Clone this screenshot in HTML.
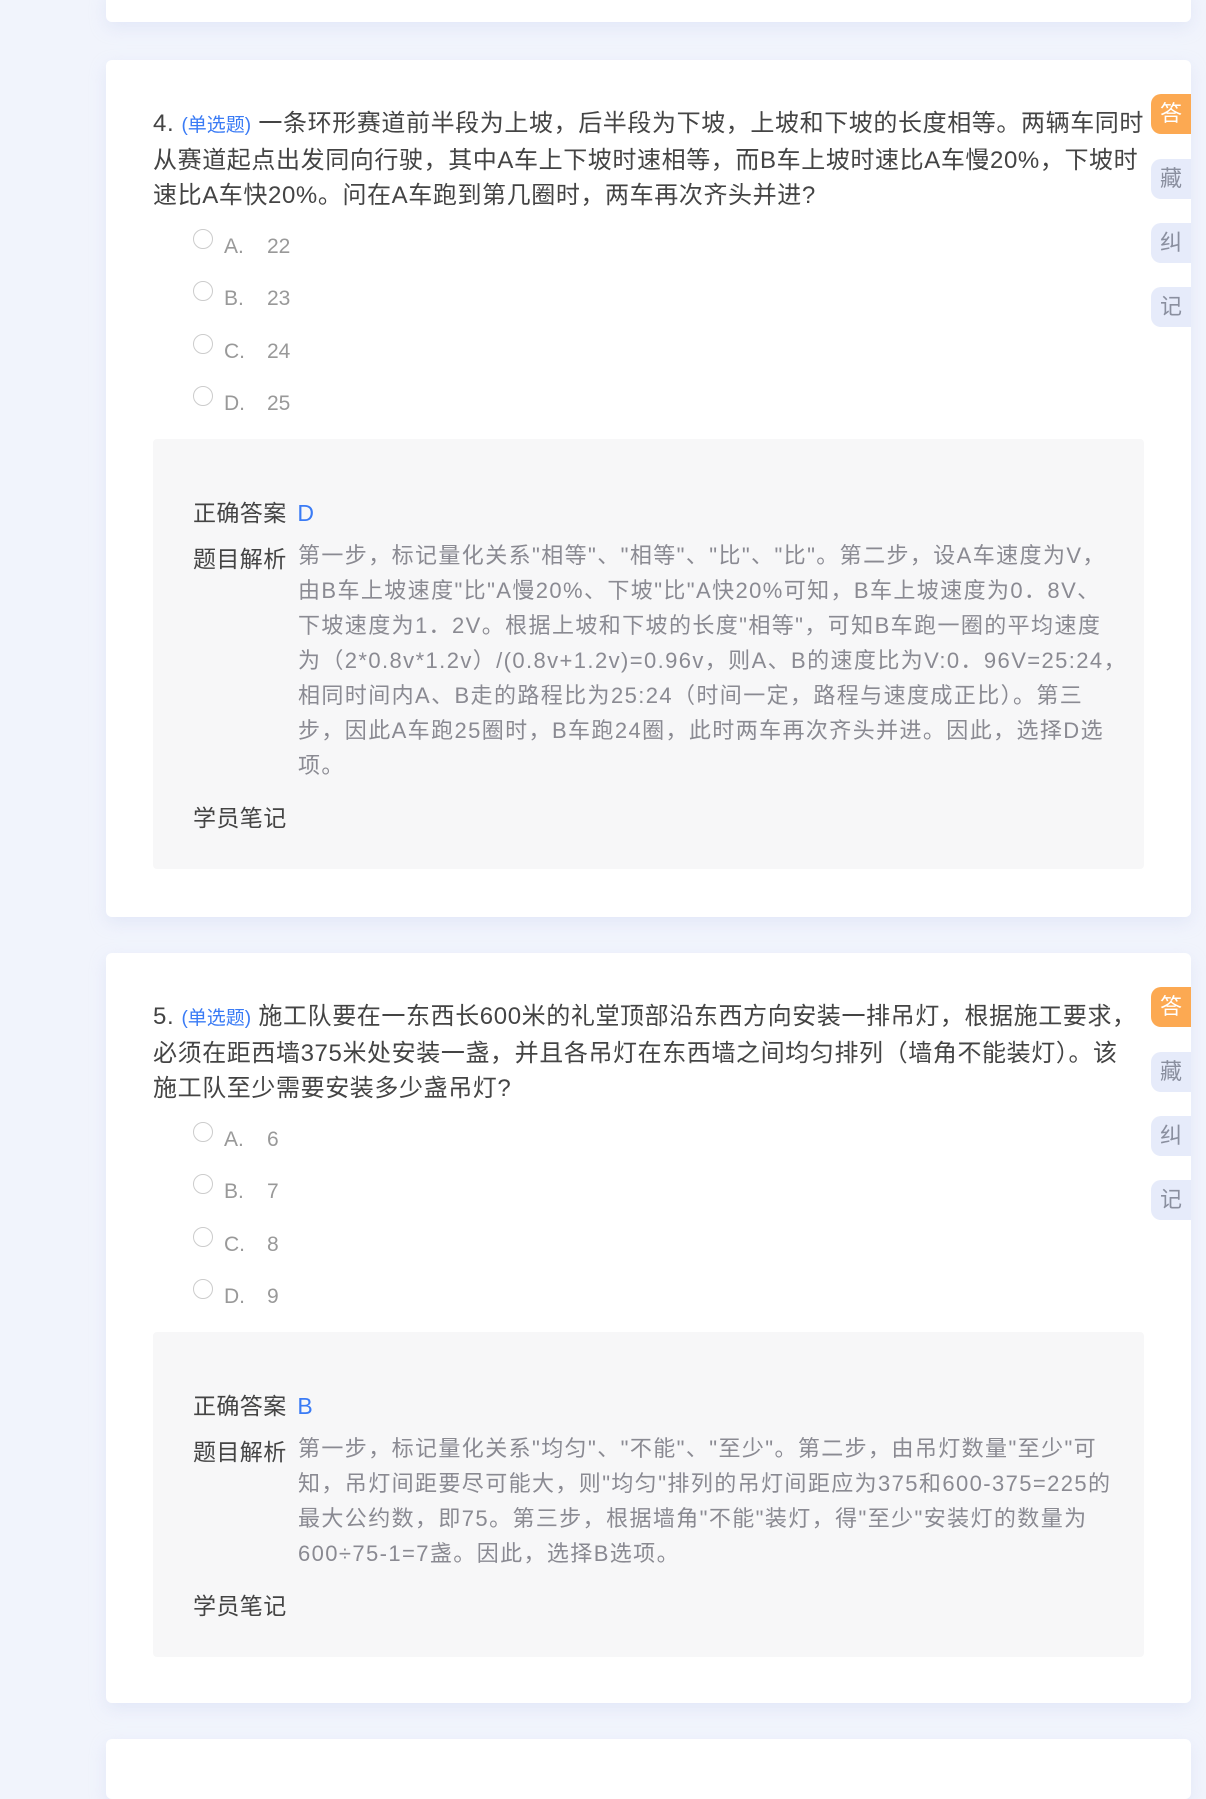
<!DOCTYPE html>
<html><head><meta charset="utf-8"><style>
*{margin:0;padding:0;box-sizing:border-box}
body{width:1206px;height:1764px;background:#f1f4fc;font-family:"Liberation Sans","Noto Sans CJK SC",sans-serif;position:relative;overflow:hidden}
.card{position:absolute;left:106px;width:1085px;background:#fff;border-radius:6px;box-shadow:0 6px 16px rgba(200,210,240,.35)}
.q{position:absolute;left:47px;font-size:24px;line-height:35px;color:#444;white-space:nowrap;letter-spacing:0.6px}
.q .t{color:#3a7bf5;font-size:19px;letter-spacing:0}
.opt{position:absolute;left:87px;font-size:21px;color:#999;height:24px;line-height:24px}
.opt i{position:absolute;left:0;top:-6px;width:20px;height:20px;border:1px solid #ccc;border-radius:50%}
.opt b{position:absolute;left:31px;font-weight:normal}
.opt span{position:absolute;left:74px}
.ans{position:absolute;left:47px;width:991px;background:#f7f7f8;border-radius:4px}
.lab{position:absolute;left:40px;font-size:23px;color:#444;white-space:nowrap;letter-spacing:0.4px}
.ana{position:absolute;left:145px;font-size:22px;line-height:35px;color:#8a8a92;white-space:nowrap;letter-spacing:1.4px}
.btn{position:absolute;left:1045px;width:40px;height:40px;border-radius:10px 0 0 10px;background:#e6ebfa;color:#8a8f9f;font-size:22px;text-align:center;line-height:40px}
.btn.o{background:#fca952;color:#fff}
</style></head><body>
<div class="card" style="top:-10px;height:32px"></div>

<div class="card" style="top:60px;height:857px">
<div class="q" style="top:46px">4. <span class="t">(单选题)</span> 一条环形赛道前半段为上坡，后半段为下坡，上坡和下坡的长度相等。两辆车同时<br>从赛道起点出发同向行驶，其中A车上下坡时速相等，而B车上坡时速比A车慢20%，下坡时<br>速比A车快20%。问在A车跑到第几圈时，两车再次齐头并进?</div>
<div class="btn o" style="top:34px">答</div><div class="btn" style="top:99px">藏</div><div class="btn" style="top:163px">纠</div><div class="btn" style="top:227px">记</div>
<div class="opt" style="top:175px"><i></i><b>A.</b><span>22</span></div>
<div class="opt" style="top:227px"><i></i><b>B.</b><span>23</span></div>
<div class="opt" style="top:280px"><i></i><b>C.</b><span>24</span></div>
<div class="opt" style="top:332px"><i></i><b>D.</b><span>25</span></div>
<div class="ans" style="top:379px;height:430px">
<div class="lab" style="top:55px">正确答案 <span style="color:#3a7bf5;margin-left:4px">D</span></div>
<div class="lab" style="top:101px">题目解析</div>
<div class="ana" style="top:99px">第一步，标记量化关系"相等"、"相等"、"比"、"比"。第二步，设A车速度为V，<br>由B车上坡速度"比"A慢20%、下坡"比"A快20%可知，B车上坡速度为0．8V、<br>下坡速度为1．2V。根据上坡和下坡的长度"相等"，可知B车跑一圈的平均速度<br>为（2*0.8v*1.2v）/(0.8v+1.2v)=0.96v，则A、B的速度比为V:0．96V=25:24，<br>相同时间内A、B走的路程比为25:24（时间一定，路程与速度成正比）。第三<br>步，因此A车跑25圈时，B车跑24圈，此时两车再次齐头并进。因此，选择D选<br>项。</div>
<div class="lab" style="top:360px">学员笔记</div>
</div>
</div>

<div class="card" style="top:953px;height:750px">
<div class="q" style="top:46px">5. <span class="t">(单选题)</span> 施工队要在一东西长600米的礼堂顶部沿东西方向安装一排吊灯，根据施工要求，<br>必须在距西墙375米处安装一盏，并且各吊灯在东西墙之间均匀排列（墙角不能装灯）。该<br>施工队至少需要安装多少盏吊灯?</div>
<div class="btn o" style="top:34px">答</div><div class="btn" style="top:99px">藏</div><div class="btn" style="top:163px">纠</div><div class="btn" style="top:227px">记</div>
<div class="opt" style="top:175px"><i></i><b>A.</b><span>6</span></div>
<div class="opt" style="top:227px"><i></i><b>B.</b><span>7</span></div>
<div class="opt" style="top:280px"><i></i><b>C.</b><span>8</span></div>
<div class="opt" style="top:332px"><i></i><b>D.</b><span>9</span></div>
<div class="ans" style="top:379px;height:325px">
<div class="lab" style="top:55px">正确答案 <span style="color:#3a7bf5;margin-left:4px">B</span></div>
<div class="lab" style="top:101px">题目解析</div>
<div class="ana" style="top:99px">第一步，标记量化关系"均匀"、"不能"、"至少"。第二步，由吊灯数量"至少"可<br>知，吊灯间距要尽可能大，则"均匀"排列的吊灯间距应为375和600-375=225的<br>最大公约数，即75。第三步，根据墙角"不能"装灯，得"至少"安装灯的数量为<br>600÷75-1=7盏。因此，选择B选项。</div>
<div class="lab" style="top:255px">学员笔记</div>
</div>
</div>

<div class="card" style="top:1739px;height:60px"></div>
</body></html>
